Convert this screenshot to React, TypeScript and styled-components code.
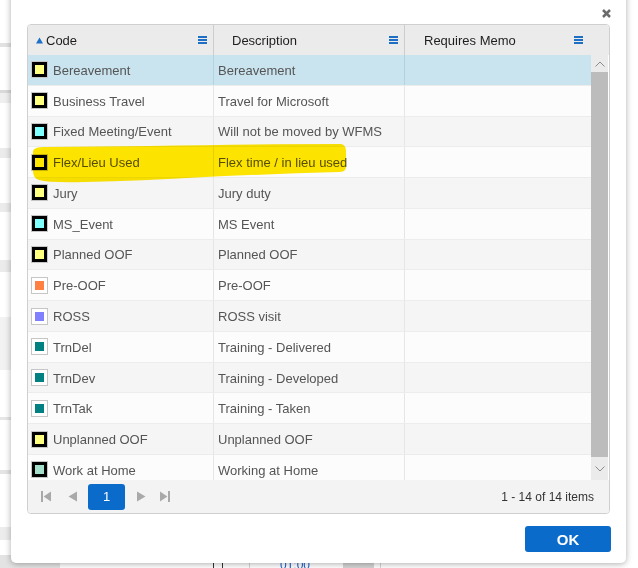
import React from 'react';
import styled, { createGlobalStyle } from 'styled-components';

const GlobalStyle = createGlobalStyle`
  html, body {
    margin: 0;
    padding: 0;
    background: #fff;
  }
  body {
    font-family: "Liberation Sans", Arial, sans-serif;
  }
`;

type AbsenceCode = {
  code: string;
  description: string;
  color: string;
  framed: boolean;
};

const codes: AbsenceCode[] = [
  { code: 'Bereavement', description: 'Bereavement', color: '#ffff80', framed: true },
  { code: 'Business Travel', description: 'Travel for Microsoft', color: '#ffff80', framed: true },
  { code: 'Fixed Meeting/Event', description: 'Will not be moved by WFMS', color: '#80ffff', framed: true },
  { code: 'Flex/Lieu Used', description: 'Flex time / in lieu used', color: '#ffff80', framed: true },
  { code: 'Jury', description: 'Jury duty', color: '#ffff80', framed: true },
  { code: 'MS_Event', description: 'MS Event', color: '#80ffff', framed: true },
  { code: 'Planned OOF', description: 'Planned OOF', color: '#ffff80', framed: true },
  { code: 'Pre-OOF', description: 'Pre-OOF', color: '#ff8040', framed: false },
  { code: 'ROSS', description: 'ROSS visit', color: '#8080ff', framed: false },
  { code: 'TrnDel', description: 'Training - Delivered', color: '#008080', framed: false },
  { code: 'TrnDev', description: 'Training - Developed', color: '#008080', framed: false },
  { code: 'TrnTak', description: 'Training - Taken', color: '#008080', framed: false },
  { code: 'Unplanned OOF', description: 'Unplanned OOF', color: '#ffff80', framed: true },
  { code: 'Work at Home', description: 'Working at Home', color: '#a4dfcb', framed: true },
];

// page behind the dialog
const bands: [number, string][] = [
  [43, '#fff'], [4, '#e2e2e2'], [43, '#fff'], [3, '#d9d9d9'], [10, '#efefef'],
  [45, '#fff'], [10, '#ebebeb'], [45, '#fff'], [9, '#ebebeb'], [48, '#fff'],
  [12, '#ebebeb'], [45, '#fff'], [53, '#f2f2f2'], [47, '#fff'], [3, '#e6e6e6'],
  [50, '#fff'], [4, '#e4e4e4'], [53, '#fff'], [13, '#ececec'], [15, '#fff'],
];

const Page = styled.div`
  position: relative;
  width: 638px;
  height: 568px;
  overflow: hidden;
  background: #fff;
`;

const Backdrop = styled.div`
  display: flex;
  flex-direction: column;
  height: 568px;
`;

const Band = styled.div<{ $h: number; $color: string }>`
  flex-shrink: 0;
  width: 300px;
  height: ${({ $h }) => $h}px;
  background: ${({ $color }) => $color};
`;

const BottomRow = styled.div`
  display: flex;
  height: 13px;
  flex-shrink: 0;
`;

const BottomCell = styled.div<{ $w: number; $bg?: string; $line?: boolean }>`
  width: ${({ $w }) => $w}px;
  height: 13px;
  background: ${({ $bg }) => $bg || 'transparent'};
  border-right: ${({ $line }) => ($line ? '1px solid #d6d6d6' : 'none')};
  flex-shrink: 0;
  display: flex;
  align-items: flex-start;
  font-size: 12px;
  color: #1a5fd0;
`;

const TinyCheck = styled.div`
  width: 8px;
  height: 8px;
  margin: 6px 0 0 3px;
  border: 1px solid #333;
`;

const BottomTime = styled.span`
  margin: 3px 0 0 30px;
`;

const Dialog = styled.div`
  position: absolute;
  left: 11px;
  top: -10px;
  width: 615px;
  height: 573px;
  box-sizing: border-box;
  padding: 0 15px 11px 16px;
  background: #fff;
  border-radius: 0 0 5px 5px;
  box-shadow: 0 1px 6px rgba(0, 0, 0, 0.32);
  display: flex;
  flex-direction: column;
`;

const TitleBar = styled.div`
  height: 34px;
  box-sizing: border-box;
  padding-top: 19px;
  display: flex;
  justify-content: flex-end;
  align-items: flex-start;
`;

const CloseButton = styled.button`
  width: 9px;
  height: 9px;
  padding: 0;
  border: 0;
  background: none;
  display: flex;
`;

const Grid = styled.div`
  width: 583px;
  height: 490px;
  box-sizing: border-box;
  border: 1px solid #cfcfcf;
  border-radius: 4px;
  overflow: hidden;
  display: flex;
  flex-direction: column;
  background: #fff;
`;

const HeaderRow = styled.div`
  display: grid;
  grid-template-columns: 185px 191px 1fr;
  height: 30px;
  flex-shrink: 0;
  background: #ebebeb;
`;

const HeaderCell = styled.div<{ $padLeft: number; $padRight: number; $divider?: boolean }>`
  display: flex;
  align-items: center;
  padding: 0 ${({ $padRight }) => $padRight}px 0 ${({ $padLeft }) => $padLeft}px;
  border-left: ${({ $divider }) => ($divider ? '1px solid #cdcdcd' : 'none')};
  font-size: 13px;
  color: #1e1e1e;
  gap: 3px;
`;

const HeaderLabel = styled.span`
  flex: 1;
`;

const Body = styled.div`
  display: flex;
  height: 425px;
  flex-shrink: 0;
`;

const Rows = styled.div`
  width: 563px;
  overflow: hidden;
`;

const Row = styled.div<{ $selected: boolean; $alt: boolean }>`
  display: grid;
  grid-template-columns: 185px 191px 187px;
  height: 30.77px;
  box-sizing: border-box;
  border-bottom: 1px solid #ececec;
  background: ${({ $selected, $alt }) => ($selected ? '#c9e4ef' : $alt ? '#f5f5f5' : '#fcfcfc')};
`;

const Cell = styled.div<{ $divider?: boolean; $selected?: boolean }>`
  display: flex;
  align-items: center;
  gap: 5px;
  padding: 1px 0 0 ${({ $divider }) => ($divider ? 4 : 3)}px;
  border-left: ${({ $divider, $selected }) =>
    $divider ? `1px solid ${$selected ? '#b2d4e2' : '#e6e6e6'}` : 'none'};
  font-size: 13px;
  color: #555;
  white-space: nowrap;
`;

const Swatch = styled.span<{ $framed: boolean; $color: string }>`
  flex-shrink: 0;
  width: 17px;
  height: 17px;
  margin-top: -1px;
  box-sizing: border-box;
  border: 1px solid #c6c6c6;
  background: #fff;
  display: flex;
  padding: ${({ $framed }) => ($framed ? 0 : 3)}px;
  &::after {
    content: '';
    flex: 1;
    background: ${({ $color }) => $color};
    border: ${({ $framed }) => ($framed ? '3px solid #000' : 'none')};
  }
`;

const Scrollbar = styled.div`
  width: 17px;
  margin-right: 1px;
  display: flex;
  flex-direction: column;
  background: #e9e9e9;
`;

const ScrollButton = styled.div<{ $h: number }>`
  height: ${({ $h }) => $h}px;
  display: flex;
  align-items: center;
  justify-content: center;
  background: #ebebeb;
`;

const Thumb = styled.div`
  flex: 1;
  background: #bcbcbc;
`;

const Pager = styled.div`
  flex: 1;
  display: flex;
  align-items: center;
  background: #f3f3f3;
  padding: 0 15px 0 1px;
`;

const PagerArrow = styled.span<{ $w: number; $ml?: number }>`
  width: ${({ $w }) => $w}px;
  margin-left: ${({ $ml }) => $ml || 0}px;
  display: flex;
  justify-content: center;
`;

const PageNumber = styled.span`
  width: 37px;
  height: 26px;
  margin-left: 3px;
  border-radius: 3px;
  background: #0b6bcb;
  color: #fff;
  font-size: 13px;
  display: flex;
  align-items: center;
  justify-content: center;
`;

const PagerInfo = styled.span`
  margin-left: auto;
  font-size: 12px;
  color: #333;
`;

const Footer = styled.div`
  margin-top: 12px;
  display: flex;
  justify-content: flex-end;
`;

const OkButton = styled.button`
  width: 86px;
  height: 26px;
  border: 0;
  border-radius: 3px;
  background: #0b6bcb;
  color: #fff;
  font-family: "Liberation Sans", Arial, sans-serif;
  font-size: 15px;
  font-weight: bold;
  padding: 0;
`;

const Highlight = styled.svg`
  position: absolute;
  left: 0;
  top: 0;
  pointer-events: none;
  mix-blend-mode: multiply;
`;

const MenuIcon = () => (
  <svg width="9" height="8" viewBox="0 0 9 8">
    <rect x="0" y="0" width="9" height="2" fill="#1f6fc5" />
    <rect x="0" y="3" width="9" height="2" fill="#1f6fc5" />
    <rect x="0" y="6" width="9" height="2" fill="#1f6fc5" />
  </svg>
);

const Chevron = ({ up }: { up: boolean }) => (
  <svg width="10" height="6" viewBox="0 0 10 6">
    <polyline
      points={up ? '0.5,5.5 5,1 9.5,5.5' : '0.5,0.5 5,5 9.5,0.5'}
      fill="none"
      stroke="#8c8c8c"
      strokeWidth="1"
    />
  </svg>
);

const gray = '#a9a9a9';

const App: React.FC = () => {
  return (
    <Page>
      <GlobalStyle />
      <Backdrop>
        {bands.map(([h, c], i) => (
          <Band key={i} $h={h} $color={c} />
        ))}
        <BottomRow>
          <BottomCell $w={60} $bg="#e3e3e3" />
          <BottomCell $w={150} />
          <BottomCell $w={39} $line>
            <TinyCheck />
          </BottomCell>
          <BottomCell $w={93}>
            <BottomTime>01:00</BottomTime>
          </BottomCell>
          <BottomCell $w={31} $bg="#d4d4d4" />
          <BottomCell $w={6} $line />
        </BottomRow>
      </Backdrop>

      <Dialog>
        <TitleBar>
          <CloseButton aria-label="Close">
            <svg width="9" height="9" viewBox="0 0 9 9">
              <path d="M1 1 L8 8 M8 1 L1 8" stroke="#6b6b6b" strokeWidth="2.5" />
            </svg>
          </CloseButton>
        </TitleBar>

        <Grid>
          <HeaderRow>
            <HeaderCell $padLeft={8} $padRight={6}>
              <svg width="7" height="7" viewBox="0 0 7 7">
                <polygon points="0,6.5 3.5,0.5 7,6.5" fill="#1e6fc8" />
              </svg>
              <HeaderLabel>Code</HeaderLabel>
              <MenuIcon />
            </HeaderCell>
            <HeaderCell $padLeft={18} $padRight={6} $divider>
              <HeaderLabel>Description</HeaderLabel>
              <MenuIcon />
            </HeaderCell>
            <HeaderCell $padLeft={19} $padRight={26} $divider>
              <HeaderLabel>Requires Memo</HeaderLabel>
              <MenuIcon />
            </HeaderCell>
          </HeaderRow>

          <Body>
            <Rows>
              {codes.map((c, i) => (
                <Row key={c.code} $selected={i === 0} $alt={i % 2 === 0}>
                  <Cell>
                    <Swatch $framed={c.framed} $color={c.color} />
                    {c.code}
                  </Cell>
                  <Cell $divider $selected={i === 0}>{c.description}</Cell>
                  <Cell $divider $selected={i === 0} />
                </Row>
              ))}
            </Rows>
            <Scrollbar>
              <ScrollButton $h={17}>
                <Chevron up />
              </ScrollButton>
              <Thumb />
              <ScrollButton $h={23}>
                <Chevron up={false} />
              </ScrollButton>
            </Scrollbar>
          </Body>

          <Pager>
            <PagerArrow $w={26} $ml={4}>
              <svg width="10" height="11" viewBox="0 0 10 11">
                <rect x="0" y="0" width="2" height="11" fill={gray} />
                <polygon points="10,0.5 2.6,5.5 10,10.5" fill={gray} />
              </svg>
            </PagerArrow>
            <PagerArrow $w={26}>
              <svg width="9" height="11" viewBox="0 0 9 11">
                <polygon points="9,0.5 0.5,5.5 9,10.5" fill={gray} />
              </svg>
            </PagerArrow>
            <PageNumber>1</PageNumber>
            <PagerArrow $w={24} $ml={4}>
              <svg width="9" height="11" viewBox="0 0 9 11">
                <polygon points="0,0.5 8.5,5.5 0,10.5" fill={gray} />
              </svg>
            </PagerArrow>
            <PagerArrow $w={24}>
              <svg width="10" height="11" viewBox="0 0 10 11">
                <polygon points="0,0.5 7.4,5.5 0,10.5" fill={gray} />
                <rect x="8" y="0" width="2" height="11" fill={gray} />
              </svg>
            </PagerArrow>
            <PagerInfo>1 - 14 of 14 items</PagerInfo>
          </Pager>
        </Grid>

        <Footer>
          <OkButton>OK</OkButton>
        </Footer>
      </Dialog>

      {/* marker highlight drawn over the Flex/Lieu row */}
      <Highlight width="638" height="568" viewBox="0 0 638 568">
        <path
          d="M33 151 Q34 147 44 147 L150 146 Q260 144 341 144 Q346 145 346 151 L346 167 Q346 172 339 172
             Q270 174 205 177 Q140 181 85 182 Q50 183 39 180 Q33 178 33 171 Z"
          fill="#ffe600"
        />
      </Highlight>
    </Page>
  );
};

export default App;
